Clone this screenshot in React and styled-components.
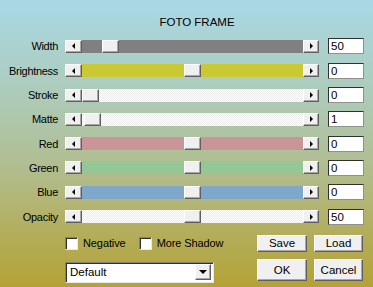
import React from 'react';
import styled, { createGlobalStyle, css } from 'styled-components';

const GlobalStyle = createGlobalStyle`
  html, body {
    margin: 0;
    padding: 0;
  }
  body {
    font-family: "Liberation Sans", Arial, sans-serif;
  }
`;

const raised = css`
  background: #f0f0f0;
  border-style: solid;
  border-width: 1px;
  border-color: #ffffff #5f5f5f #5f5f5f #ffffff;
  box-shadow: inset -1px -1px 0 #a8a8a8;
  box-sizing: border-box;
`;

const sunken = css`
  background: #fff;
  border-style: solid;
  border-width: 1px;
  border-color: #808080 #e8e8e8 #e8e8e8 #808080;
  box-shadow: inset 1px 1px 0 #303030;
  box-sizing: border-box;
`;

const Dialog = styled.div`
  width: 373px;
  height: 287px;
  box-sizing: border-box;
  padding-top: 14px;
  font-size: 11px;
  color: #000;
  background: linear-gradient(
    to bottom,
    #a9d8e6 0%,
    #adcab6 35%,
    #b1bc8c 60%,
    #b3ad5a 82%,
    #b4a236 100%
  );
`;

const Title = styled.div`
  height: 16px;
  line-height: 16px;
  padding-left: 21px;
  text-align: center;
  font-size: 11.5px;
`;

const Rows = styled.div`
  margin-top: 4.35px;
`;

const Row = styled.div`
  display: flex;
  align-items: center;
  height: 24.3px;
`;

const Label = styled.div`
  width: 58px;
  margin-right: 7px;
  text-align: right;
  white-space: nowrap;
  letter-spacing: -0.3px;
`;

const SliderFrame = styled.div`
  display: flex;
  width: 254px;
  height: 13px;
  margin-right: 9px;
`;

const ArrowButton = styled.div`
  ${raised};
  flex: 0 0 ${p => p.$w}px;
  height: 100%;
  display: flex;
  align-items: center;
  justify-content: center;
`;

const Tri = styled.span`
  width: 0;
  height: 0;
  border-top: 3px solid transparent;
  border-bottom: 3px solid transparent;
  ${p => (p.$dir === 'left'
    ? css`border-right: 3px solid #000;`
    : css`border-left: 3px solid #000;`)}
`;

const checker = css`
  background-color: #fff;
  background-image: repeating-conic-gradient(#ececec 0 25%, #ffffff 0 50%);
  background-size: 2px 2px;
`;

const Track = styled.div`
  position: relative;
  flex: 1;
  height: 100%;
  ${p => (p.$color ? css`background: ${p.$color};` : checker)}
`;

const Thumb = styled.div`
  ${raised};
  position: absolute;
  top: 0;
  width: 17px;
  height: 13px;
`;

const ValueBox = styled.div`
  width: 36px;
  height: 16px;
  box-sizing: border-box;
  background: #fff;
  border-style: solid;
  border-width: 1px;
  border-color: #303030 #909090 #909090 #303030;
  padding-left: 2px;
  line-height: 14px;
  font-size: 11.5px;
`;

const Bottom = styled.div`
  display: grid;
  grid-template-columns: 192px 106px;
  grid-template-rows: 17px 24px;
  row-gap: 7px;
  margin-top: 6.25px;
  padding-left: 65px;
`;

const Checks = styled.div`
  display: flex;
  align-items: center;
`;

const CheckItem = styled.label`
  display: flex;
  align-items: center;
  gap: 5px;
  margin-right: ${p => p.$gap}px;
  white-space: nowrap;
  font-size: 11px;
  letter-spacing: -0.1px;
`;

const Box = styled.span`
  ${sunken};
  display: inline-block;
  width: 13px;
  height: 13px;
`;

const Buttons = styled.div`
  display: flex;
  gap: 7px;
  align-items: flex-start;
`;

const Button = styled.div`
  ${raised};
  width: ${p => p.$w}px;
  height: ${p => p.$h}px;
  display: flex;
  align-items: center;
  justify-content: center;
  font-size: 11.5px;
`;

const Select = styled.div`
  ${sunken};
  align-self: end;
  width: 149px;
  height: 21px;
  display: flex;
  align-items: center;
  justify-content: space-between;
  padding: 0 2px 0 4px;
  font-size: 11.5px;
`;

const SelectArrow = styled.div`
  ${raised};
  width: 16px;
  height: 16px;
  display: flex;
  align-items: center;
  justify-content: center;
`;

const DownTri = styled.span`
  width: 0;
  height: 0;
  border-left: 4px solid transparent;
  border-right: 4px solid transparent;
  border-top: 4px solid #000;
`;

const sliders = [
  { label: 'Width', color: '#808080', pos: 20, value: '50' },
  { label: 'Brightness', color: '#cbc933', pos: 102, value: '0' },
  { label: 'Stroke', color: null, pos: 0, value: '0' },
  { label: 'Matte', color: null, pos: 2, value: '1' },
  { label: 'Red', color: '#c99597', pos: 102, value: '0' },
  { label: 'Green', color: '#95c796', pos: 102, value: '0' },
  { label: 'Blue', color: '#7fa7c9', pos: 102, value: '0' },
  { label: 'Opacity', color: null, pos: 102, value: '50' },
];

const Slider = ({ color, pos }) => (
  <SliderFrame>
    <ArrowButton $w={17}><Tri $dir="left" /></ArrowButton>
    <Track $color={color}>
      <Thumb style={{ left: pos }} />
    </Track>
    <ArrowButton $w={16}><Tri $dir="right" /></ArrowButton>
  </SliderFrame>
);

export default function App() {
  return (
    <>
      <GlobalStyle />
      <Dialog>
        <Title>FOTO FRAME</Title>
        <Rows>
          {sliders.map(s => (
            <Row key={s.label}>
              <Label>{s.label}</Label>
              <Slider color={s.color} pos={s.pos} />
              <ValueBox>{s.value}</ValueBox>
            </Row>
          ))}
        </Rows>
        <Bottom>
          <Checks>
            <CheckItem $gap={13}><Box />Negative</CheckItem>
            <CheckItem $gap={0}><Box />More Shadow</CheckItem>
          </Checks>
          <Buttons>
            <Button $w={50} $h={17}>Save</Button>
            <Button $w={49} $h={17}>Load</Button>
          </Buttons>
          <Select>
            Default
            <SelectArrow><DownTri /></SelectArrow>
          </Select>
          <Buttons>
            <Button $w={50} $h={22}>OK</Button>
            <Button $w={49} $h={22}>Cancel</Button>
          </Buttons>
        </Bottom>
      </Dialog>
    </>
  );
}
